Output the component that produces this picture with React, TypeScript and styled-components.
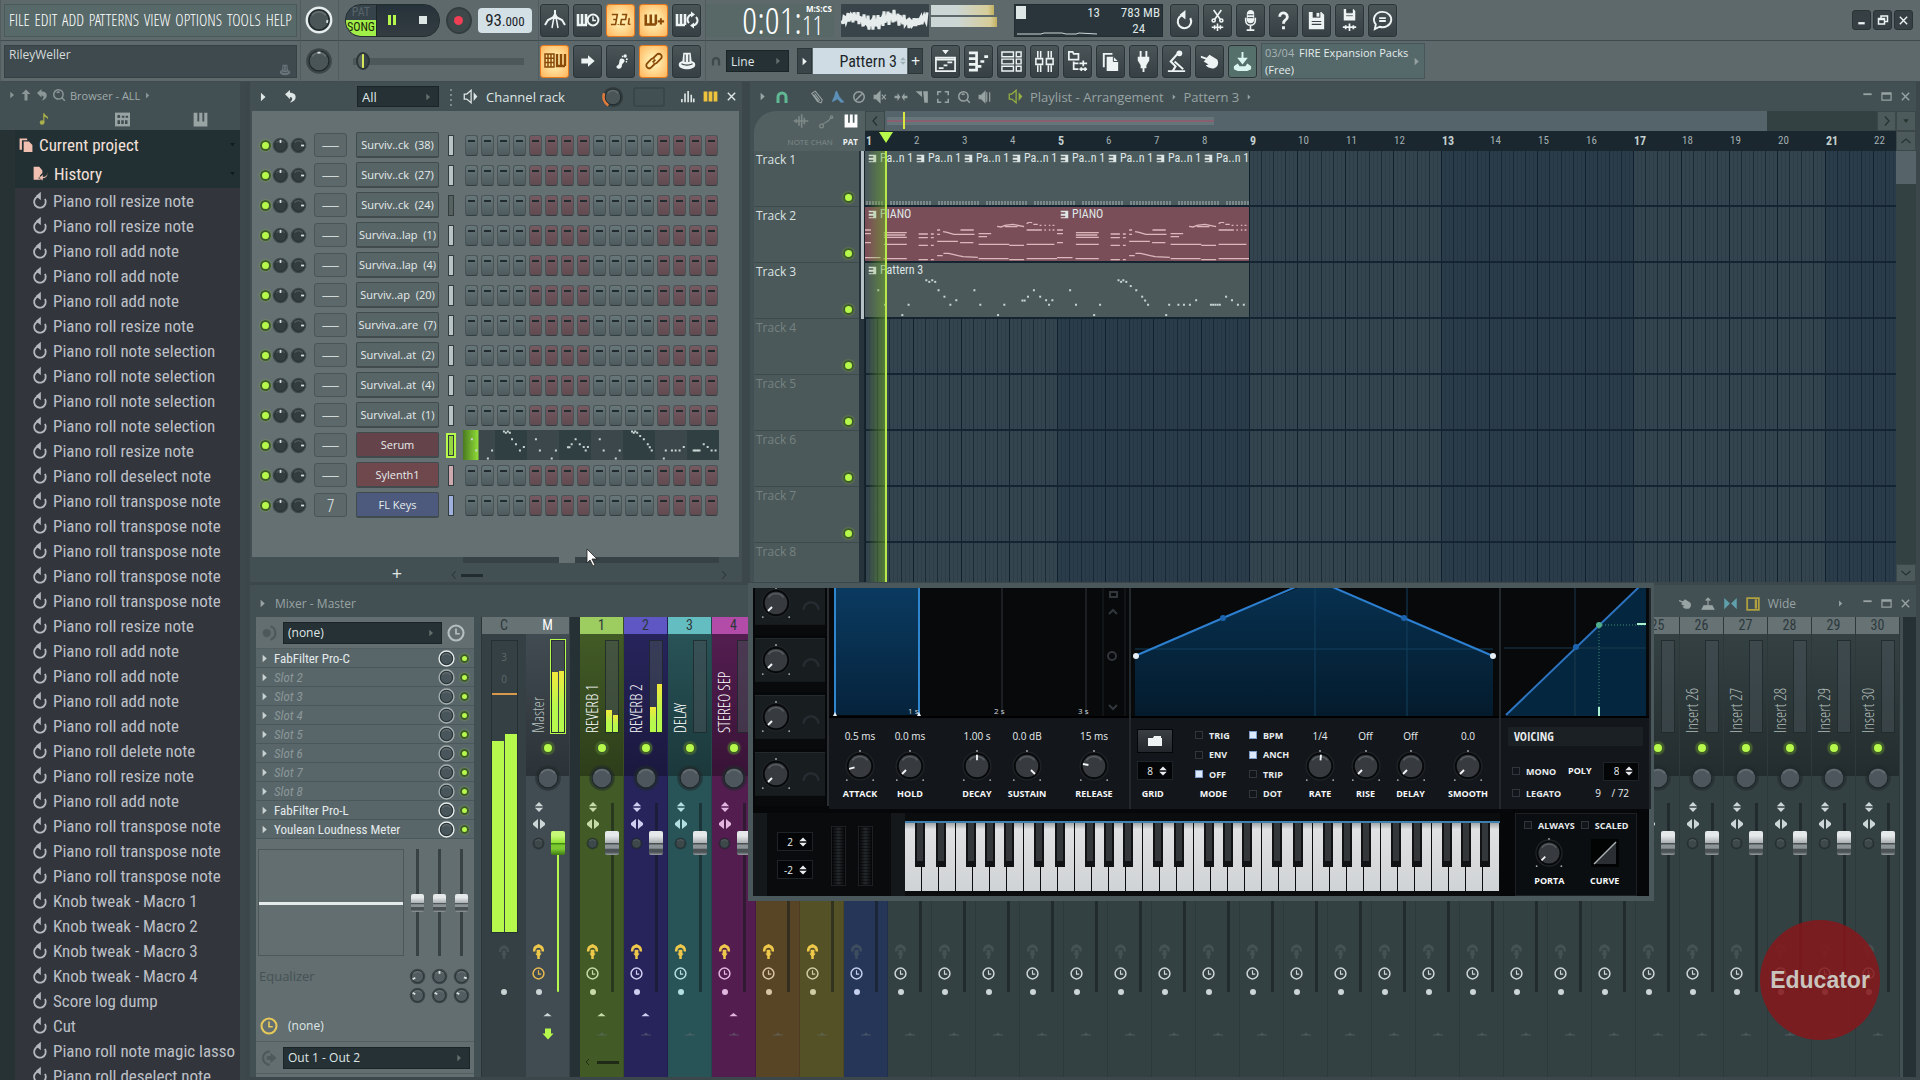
import React from "react";
import styled, { createGlobalStyle, css } from "styled-components";

const regular = `"Open Sans", "Noto Sans", sans-serif`;
const lime = "#b6f84c";
const light = css`font-family: "Open Sans Condensed Light", "Open Sans Condensed", "Roboto Condensed", sans-serif; font-weight: 400;`;
const cond = css`font-family: "Roboto Condensed", "Open Sans Condensed", sans-serif; font-weight: 400;`;

const Global = createGlobalStyle`
  *, *::before, *::after { box-sizing: border-box; }
  html, body { margin: 0; background: #3f4b4e; }
  body { font-family: ${regular}; font-size: 13px; color: #dfe6e6; }
  button, select, input { font: inherit; color: inherit; margin: 0; padding: 0; border: 0; background: none; border-radius: 0; outline: 0; }
  button { display: inline-flex; align-items: center; justify-content: center; }
  select { appearance: none; }
  svg { display: block; flex: none; }
`;

/* ---------- icons ---------- */

const glyphs: Record<string, React.ReactNode> = {
  metronome: (
    <g fill="none" stroke="currentColor" strokeWidth="2">
      <path d="M12 2v5" />
      <path d="M12 6 10 10h4z" fill="currentColor" />
      <path d="M11 9 5 12l-3 5M13 9l6 3 3 5" />
      <path d="M11 9 9 20M13 9l2 11" strokeWidth="1.500" />
    </g>
  ),
  keysClock: (
    <g fill="none" stroke="currentColor" strokeWidth="2">
      <path d="M2 6v11h9M6 6v11M10 6v11" strokeWidth="2.6" />
      <circle cx="17" cy="12" r="5.4" fill="#3b4447" />
      <path d="M17 8.500v4h3" strokeWidth="1.500" />
    </g>
  ),
  count: (
    <g fill="none" stroke="currentColor" strokeWidth="1.700">
      <path d="M2 6h6l-1 5.500H3.500M7 11.500 6 17H1M13 6h5l-1 5.500h-4.500l-1 5.500h5M21 10l-1 7M9 16.500v1" />
      <path d="M21.500 16v1.500" />
    </g>
  ),
  keysPlus: (
    <g fill="none" stroke="currentColor" strokeWidth="2.800">
      <path d="M3 6v11h11M8.500 6v11M14 6v11" />
      <path d="M19.500 10v7M16 13.500h7" strokeWidth="2.200" />
    </g>
  ),
  keysLoop: (
    <g fill="none" stroke="currentColor" strokeWidth="2">
      <path d="M2 6v11h8M6 6v11M10 6v11" strokeWidth="2.6" />
      <path d="M14 15a5 5 0 0 1 3-8.500M21 9a5 5 0 0 1-3 8.500" />
      <path d="m16 3.500 4 3-4 3zM19 14.500l-4 3 4 3z" fill="currentColor" stroke="none" />
    </g>
  ),
  typing: (
    <g fill="none" stroke="currentColor" strokeWidth="1.500">
      <path d="M2 5h9v13H2zM2 9.300h9M2 13.600h9M5 5v13M8 5v13" />
      <path d="M14 5v12h8M18 5v12M22 5v12" strokeWidth="2.400" />
    </g>
  ),
  arrow: <path d="M4 9h8V5l8 7-8 7v-4H4z" fill="currentColor" />,
  foot: (
    <g fill="currentColor">
      <path d="M12 9c3 0 5 1 4 4-1 2-3 2-3 5 0 2-2 4-5 3-2-1-2-3 0-4 3-1 1-7 4-8z" />
      <circle cx="17" cy="6" r="2" /><circle cx="14" cy="6.500" r="1" /><circle cx="19" cy="10" r="1.200" /><circle cx="18.500" cy="13" r="1" />
    </g>
  ),
  link: (
    <g fill="none" stroke="currentColor" strokeWidth="2">
      <path d="m10.500 13.500 3-3M11 9l4-4a3 3 0 0 1 4.500 4.500L15 14a3 3 0 0 1-3.500.5M13 15l-4 4a3 3 0 0 1-4.500-4.500L9 10a3 3 0 0 1 3.500-.5" />
    </g>
  ),
  pedal: (
    <g fill="currentColor">
      <path d="M8 3h8l1 9c3 1 4 2 4 4 0 3-4 5-9 5s-9-2-9-5c0-2 1-3 4-4z" />
      <path d="M10 5v8M14 5v8M6 15c3 2 9 2 12 0" stroke="#3b4447" strokeWidth="1.200" fill="none" />
    </g>
  ),
  undo: (
    <g fill="none" stroke="currentColor" strokeWidth="2.200">
      <path d="M12 6a7 7 0 1 0 6 3.500" />
      <path d="M13 1v10L7 6z" fill="currentColor" stroke="none" />
    </g>
  ),
  cut: (
    <g fill="none" stroke="currentColor" strokeWidth="1.700">
      <path d="M8 1l7 10M16 1 9 11" />
      <circle cx="8" cy="12" r="1.600" /><circle cx="16" cy="12" r="1.600" />
      <path d="M6 19h12M9 17v4M12 15v8M15 17v4" />
    </g>
  ),
  mic: (
    <g fill="none" stroke="currentColor" strokeWidth="1.700">
      <rect x="9" y="2" width="6" height="12" rx="3" fill="currentColor" />
      <path d="M7 9v3a5 5 0 0 0 10 0V9M12 17v4M8 22h8" />
      <path d="M9 6h6M9 9h6" stroke="#3b4447" strokeWidth="1" />
    </g>
  ),
  help: (
    <g fill="none" stroke="currentColor" strokeWidth="3">
      <path d="M8 8a4 4 0 1 1 6 3.500c-1.500 1-2 1.500-2 4M12 18v3" />
    </g>
  ),
  save: (
    <g>
      <path d="M4 3h13l3 3v15H4z" fill="currentColor" />
      <path d="M8 3h8v6H8z" fill="#3b4447" /><path d="M12 4h3v4h-3z" fill="currentColor" />
      <path d="M7 13h10M7 16h10" stroke="#3b4447" strokeWidth="1.200" />
    </g>
  ),
  saveWave: (
    <g>
      <path d="M6 0h10l2 2v10H6z" fill="currentColor" />
      <path d="M9 0h6v4H9zM8.500 7h7" fill="#3b4447" stroke="#3b4447" strokeWidth=".8" />
      <path d="M5 19h14M8 17v4M12 15v8M16 17v4" stroke="currentColor" strokeWidth="1.800" />
    </g>
  ),
  chat: (
    <g fill="none" stroke="currentColor" strokeWidth="2">
      <path d="M12 3a9 8 0 1 1-3 15.500L4 21l1-5A8.500 8 0 0 1 12 3zM8.500 9.500h7M8.500 12.500h7" />
    </g>
  ),
  playlist: (
    <g fill="none" stroke="currentColor" strokeWidth="1.800">
      <path d="M2 8h20v14H2zM2 10h20M5 19h5M10 16h4M14 13h5" />
      <path d="M8.500 0h7L12 4.500z" fill="currentColor" stroke="none" />
    </g>
  ),
  piano: (
    <g fill="none" stroke="currentColor" strokeWidth="2.800">
      <path d="M2 3h8v18H2M2 9h7M2 15h7" />
      <path d="M11 17h4M14 12h4M18 7h4" />
    </g>
  ),
  rack: (
    <g fill="none" stroke="currentColor" strokeWidth="1.500">
      <path d="M2 2h12v5H2zM2 9.500h12v5H2zM2 17h12v5H2zM17 2h5v5h-5zM17 9.500h5v5h-5zM17 17h5v5h-5z" />
    </g>
  ),
  mixer: (
    <g fill="none" stroke="currentColor" strokeWidth="1.600">
      <path d="M5 1v7M8 1v7M5 16v7M8 16v7M16 1v7M19 1v7M16 16v7M19 16v7" />
      <path d="M3 9h7v6H3zM14 9h7v6h-7z" />
    </g>
  ),
  tree: (
    <g fill="none" stroke="currentColor" strokeWidth="1.800">
      <path d="M3 2h4l1 2h5v6H3zM8 12v8h5M8 14h5M14 14h8M18 11v6M14 20h8M16 18v4M20 18v4" />
    </g>
  ),
  files: (
    <g fill="currentColor">
      <path d="M4 3h10v2H6v13H4z" />
      <path d="M8 7h7l5 5v10H8z" /><path d="M15 7v5h5" fill="none" stroke="#3b4447" />
    </g>
  ),
  plug: (
    <g fill="currentColor">
      <path d="M8 1h2v6h4V1h2v6h2v4l-3 5v3h-2v4h-2v-4H9v-3l-3-5V7h2z" />
    </g>
  ),
  tempoTap: (
    <g fill="none" stroke="currentColor" strokeWidth="2.200">
      <path d="M13 4 6 12l5 5-3 5" />
      <circle cx="15" cy="3.500" r="3" fill="currentColor" stroke="none" />
      <path d="M3 22h18M10 12l9 8" strokeWidth="2" />
    </g>
  ),
  hand: <path d="M3 6l6 2 3-3 8 5c2 3 1 8-3 9-4 1-7-1-9-3l3-1-5-3 2-2-5-2z" fill="currentColor" />,
  install: (
    <g fill="none" stroke="currentColor" strokeWidth="2">
      <path d="M12 2v11M8.500 9l3.500 4.500L15.500 9z" fill="currentColor" />
      <path d="M7 14l-4 3v3l4 2h10l4-2v-3l-4-3-2 3H9z" fill="currentColor" stroke="none" />
    </g>
  ),
  magnet: <path d="M6 21v-9a6 6 0 0 1 12 0v9" fill="none" stroke="currentColor" strokeWidth="4.500" />,
  pencil: <path d="M3 6l6-4 12 15-2 5-6-2zM8 6l9 12M6 8l9 12" fill="none" stroke="currentColor" strokeWidth="1.800" />,
  brush: <path d="M9 1c3 2 4 8 6 11l8 9-6 1-6-6-9 5c0-5 3-8 4-12s1-6 3-8z" fill="currentColor" />,
  none: <g fill="none" stroke="currentColor" strokeWidth="2.500"><circle cx="12" cy="12" r="9" /><path d="M6 18 18 6" /></g>,
  mute: <g stroke="currentColor" strokeWidth="2"><path d="M2 9h4l6-6v18l-6-6H2z" fill="currentColor" /><path d="M15 8l7 8M22 8l-7 8" /></g>,
  slip: <path d="M11 12 6 5v5H1v4h5v5zM13 12l5-7v5h5v4h-5v5z" fill="currentColor" />,
  slice: <path d="M1 2h11v10zM14 2h8v20h-6z" fill="currentColor" />,
  select: <path d="M3 9V3h6M15 3h6v6M21 15v6h-6M9 21H3v-6" fill="none" stroke="currentColor" strokeWidth="2.600" />,
  zoom: <g fill="none" stroke="currentColor" strokeWidth="2.500"><circle cx="11" cy="11" r="8" /><path d="m16 16 6 6M8 8a4 4 0 0 1 5 0" /></g>,
  play: <g stroke="currentColor" strokeWidth="2"><path d="M2 9h4l6-6v18l-6-6H2z" fill="currentColor" /><path d="M15 4v16M20 4v16" /></g>,
  speaker: <g fill="none" stroke="currentColor" strokeWidth="2"><path d="M2 8h4l7-6v20l-7-6H2z" /><path d="M17 5l6 7-6 7z" fill="currentColor" stroke="none" /></g>,
  bars: <path d="M3 21v-5M8 21V7M13 21V3M18 21V9M22 21v-6" stroke="currentColor" strokeWidth="2.600" />,
  steps: <path d="M1 4h6v16H1zM9 4h6v16H9zM17 4h6v16h-6z" fill="currentColor" />,
  close: <path d="M4 4l16 16M20 4 4 20" stroke="currentColor" strokeWidth="3" />,
  min: <path d="M3 7h18" stroke="currentColor" strokeWidth="4" />,
  minLow: <path d="M5 18h14" stroke="currentColor" strokeWidth="5" />,
  max: <path d="M2 4h20v16H2zM2 7h20" fill="none" stroke="currentColor" strokeWidth="2.600" />,
  restore: <path d="M3 9h12v11H3zM8 9V4h13v11h-6M3 11h12" fill="none" stroke="currentColor" strokeWidth="3" />,
  wide: <g><path d="M2 2h20v20H2z" fill="none" stroke="currentColor" strokeWidth="3" /><path d="M15 4h4v16h-4z" fill="currentColor" /></g>,
  tri: <path d="M7 2l11 10-11 10z" fill="currentColor" />,
  triDown: <path d="M4 7h16l-8 11z" fill="currentColor" />,
  up: <path d="M12 1l9 9h-6v13H9V10H3z" fill="currentColor" />,
  down: <path d="M12 23l11-12h-5V1H6v10H1z" fill="currentColor" />,
  back: <path d="M2 8l9-8v5c8 0 12 4 10 11-1 3-5 6-10 7 5-4 6-10 0-10v4z" fill="currentColor" />,
  note: <g fill="currentColor"><circle cx="7" cy="18" r="4" /><path d="M9 18V2h2c1 5 8 4 6 11-1-4-4-4-6-5v10z" /></g>,
  plugin: <g><path d="M0 1h24v22H0z" fill="currentColor" /><g fill="#3f4b4d"><circle cx="6" cy="7" r="2.500" /><path d="M11 6h4v3h-4zM17 6h4v3h-4zM4 13h4v6H4zM10 13h4v6h-4zM16 13h4v6h-4z" /></g></g>,
  keys: <path d="M1 1v22h22V1h-5v14h-3V1h-5v14H7V1z" fill="currentColor" />,
  clock: <g fill="none" stroke="currentColor" strokeWidth="2.800"><circle cx="12" cy="12" r="10" /><path d="M12 6v7h5" strokeWidth="2.200" /></g>,
  route: <g fill="currentColor"><path d="M3 12c0-6 2-9 5-10l4-2 4 2c3 1 5 4 5 10h-4c0-4-2-6-5-6s-5 2-5 6z" /><path d="M9 9h6v6h2l-3 4v5h-4v-5l-3-4h2z" /></g>,
  updown: <path d="M12 0l10 10H2zM12 24l10-10H2z" fill="currentColor" />,
  leftright: <path d="M10 2v20L0 14v-4zM14 2v20l10-8v-4z" fill="currentColor" />,
  caret: <path d="M12 5l11 9H1z" fill="currentColor" />,
  ext: <path d="M2 13h6l4-4 4 4h6v2H2z" fill="currentColor" />,
  chevL: <path d="M16 3l-8 9 8 9" fill="none" stroke="currentColor" strokeWidth="2.600" />,
  chevR: <path d="M8 3l8 9-8 9" fill="none" stroke="currentColor" strokeWidth="2.600" />,
  chevU: <path d="M3 16l9-8 9 8" fill="none" stroke="currentColor" strokeWidth="2.600" />,
  chevD: <path d="M3 8l9 8 9-8" fill="none" stroke="currentColor" strokeWidth="2.600" />,
  wave: <path d="M1 12h22M5 9v6M9 5v14M13 2v20M17 7v10" stroke="currentColor" strokeWidth="2.400" />,
  auto: <g fill="none" stroke="currentColor" strokeWidth="2"><circle cx="4" cy="19" r="3" /><path d="M6 17C10 12 14 14 20 5" /><circle cx="20" cy="5" r="2" /></g>,
  pat: <path d="M2 2h20v20H2v-3h12v-4H2v-5h12V6H2z" fill="currentColor" />,
  io: <g fill="none" stroke="currentColor" strokeWidth="3"><circle cx="9" cy="12" r="4" fill="currentColor" /><path d="M14 3a9.500 9.500 0 0 1 0 18" /></g>,
  out: <g fill="none" stroke="currentColor" strokeWidth="3"><path d="M13 3a9 9 0 1 0 0 18" /><path d="M9 12h6" strokeWidth="5" /><path d="M14 5l8 7-8 7z" fill="currentColor" stroke="none" /></g>,
  arc: <path d="M3 20a9 9 0 0 1 18 0" fill="none" stroke="currentColor" strokeWidth="3" />,
  doc: <g fill="currentColor"><path d="M1 1h13v3H5v16H1z" /><path d="M8 6h9l6 6v12H8z" /></g>,
  hist: <g><path d="M1 1h9l5 6v4l-4 4 4 7H1z" fill="currentColor" /><path d="M23 8c1 6-2 9-7 9v-4l-7 6 7 5v-4c6 0 9-5 7-12z" fill="currentColor" stroke="#223033" /></g>,
  mono: <path d="M2 3l9 9-9 9zM22 3l-9 9 9 9z" fill="currentColor" />,
  align: <path d="M12 2v13M8 6l4-4 4 4M5 15h14l3 6H2z" fill="currentColor" stroke="currentColor" strokeWidth="2" />,
  spin: <path d="M12 1l9 9H3zM12 23l9-9H3z" fill="currentColor" />,
};

const Icon = ({ n, s = 14 }: { n: string; s?: number }) => (
  <svg width={s} height={s} viewBox="0 0 24 24" aria-hidden="true">{glyphs[n]}</svg>
);

/* ---------- shared parts ---------- */

const Tint = styled.span<{ $c: string }>`display: inline-flex; color: ${p => p.$c};`;
const Gap = styled.span<{ $w: number }>`flex: none; width: ${p => p.$w}px;`;

const KnobButton = styled.button`flex: none;`;
const Knob = ({ s, a = 0, face = "#424c50", mark = "#d9e0e0", ring, arc, label, len = 0.55 }: {
  s: number; a?: number; face?: string; mark?: string; ring?: string; arc?: string; label: string; len?: number;
}) => {
  const r = (a * Math.PI) / 180;
  const dx = Math.sin(r), dy = -Math.cos(r);
  return (
    <KnobButton aria-label={label}>
      <svg width={s} height={s} viewBox="-12 -12 24 24">
        <circle r="11" fill="#20292b" opacity=".55" />
        {ring && <circle r="10.500" fill="none" stroke={ring} strokeWidth="2" />}
        {arc && <path d="M-9.500 -4A10.500 10.500 0 0 0 -5 9" fill="none" stroke={arc} strokeWidth="3" />}
        <circle r="8.500" fill={face} stroke="#1e272a" strokeWidth="1" />
        <path d="M-6 -4a7.300 7.300 0 0 1 12 0" fill="none" stroke="#fff" opacity=".13" strokeWidth="2" />
        {mark !== "none" && <path d={`M${dx * 8 * (1 - len)} ${dy * 8 * (1 - len)}L${dx * 8} ${dy * 8}`} stroke={mark} strokeWidth="2.500" />}
      </svg>
    </KnobButton>
  );
};

const Led = styled.input.attrs({ type: "checkbox", defaultChecked: true })<{ $s?: number }>`
  appearance: none; flex: none; width: ${p => p.$s ?? 11}px; height: ${p => p.$s ?? 11}px; border-radius: 50%;
  background: #455; border: 2px solid #3f5a2c;
  &:checked { background: ${lime}; box-shadow: 0 0 2px rgba(160, 230, 60, .6); }
`;

const Picker = styled.span<{ $w?: string; $h: number; $bare?: boolean }>`
  display: flex; align-items: center; flex: ${p => (p.$w ? "none" : 1)}; width: ${p => p.$w ?? "auto"}; height: ${p => p.$h}px;
  padding: 0 6px 0 4px; color: #dfe6e6; background: #263135; border: 1px solid #1b2528;
  ${p => p.$bare && css`background: none; border-color: transparent;`}
  select { flex: 1; min-width: 0; }
  svg { color: #64706f; }
`;
const Choose = ({ w, h, label, value, bare }: { w?: string; h: number; label: string; value: string; bare?: boolean }) => (
  <Picker $w={w} $h={h} $bare={bare}>
    <select aria-label={label} defaultValue={value}><option>{value}</option></select>
    <Icon n="tri" s={8} />
  </Picker>
);

/* ---------- toolbar ---------- */

const Bar = styled.header`
  display: grid; grid-template-columns: 300px 38px 200px 167px 1fr; grid-auto-rows: 41px; background: #5e696b;
`;
const Cell = styled.div<{ $gap?: number; $pad?: number }>`
  display: flex; align-items: center; gap: ${p => p.$gap ?? 0}px; padding: 0 ${p => p.$pad ?? 0}px;
  min-width: 0; border-bottom: 1px solid #3f4b4f; border-left: 1px solid #515c5f;
`;
const Menu = styled.nav`
  display: flex; flex: 1; align-items: center; justify-content: space-between; height: 33px; padding: 0 4px;
  background: #576969; border: 1px solid #4a5a5c; ${light} font-size: 16px; color: #fff;
  a { color: inherit; text-decoration: none; }
`;
const Hint = styled.div`
  display: flex; flex: 1; justify-content: space-between; height: 33px; padding: 2px 4px 0; background: #3f4a4e; border: 1px solid #364145;
  font: 400 12px/14px ${regular}; color: #d5dcdc;
  span { align-self: flex-end; display: flex; color: #68757a; }
`;
const Transport = styled.div`
  display: flex; height: 33px; border-radius: 16px; overflow: hidden; background: #2b363b; border: 1px solid #242e31;
`;
const Mode = styled.button`flex-direction: column; width: 32px; border-right: 1px solid #1c2528;`;
const ModeLine = styled.span<{ $on?: boolean }>`
  display: flex; align-items: center; justify-content: center; width: 100%; flex: 1; ${cond} font-size: 12px; line-height: 15px;
  background: ${p => (p.$on ? "#a2ee48" : "#36434a")}; color: ${p => (p.$on ? "#16240a" : "#56646a")};
`;
const Play = styled.button<{ $c: string }>`width: 32px; color: ${p => p.$c}; background: linear-gradient(#26323a, #333c41);`;
const Record = styled.button`
  width: 27px; height: 27px; border-radius: 50%; background: #3d484b; border: 2px solid #333d40;
  &::after { content: ""; width: 9px; height: 9px; border-radius: 50%; background: #ee3f55; }
`;
const Tempo = styled.button`
  width: 56px; height: 25px; border-radius: 4px; background: #d3e0e6; color: #1b2428; ${cond} font-size: 17px; align-items: baseline; line-height: 24px;
  small { font-size: 13px; }
`;
const Tool = styled.button<{ $on?: boolean; $green?: boolean }>`
  width: 29px; height: 33px; flex: none; border-radius: 3px; color: #eef3f3;
  background: linear-gradient(#4a5558, #363f43); border: 1px solid #2b3538; box-shadow: 0 0 0 1px #68757a55;
  ${p => p.$on && css`background: radial-gradient(#ffeeb0 20%, #ffb45a); border-color: #e87a1e; color: #8a4a08;`}
  ${p => p.$green && css`background: #55706a; color: #d9f6ee;`}
`;
const Track = styled.input.attrs({ type: "range" })`
  appearance: none; flex: 1; min-width: 0; height: 18px;
  background: linear-gradient(#4d585a, #4d585a) 0 50% / 100% 7px no-repeat;
  &::-webkit-slider-thumb { appearance: none; width: 14px; height: 18px; border-radius: 50%; border: 2px solid #2b3538; background: linear-gradient(90deg, #55605f 40%, #d7e85a 42% 58%, #39444a 60%); }
`;
const Clock = styled.div`
  display: flex; width: 128px; height: 33px; padding-right: 2px; justify-content: flex-end; background: #576867; color: #fff; ${light} font-size: 37px; line-height: 32px;
`;
const ClockEnd = styled.span`
  display: flex; flex-direction: column; sup { font: bold 8px/10px ${regular}; padding-left: 4px; } small { font-size: 26px; line-height: 22px; }
`;
const Scope = styled.div`display: flex; gap: 2px; width: 166px; height: 33px;`;
const ScopeBox = styled.div`background: #39444a; width: 88px;`;
const Peaks = styled.div`display: flex; flex-direction: column; gap: 2px; width: 66px; padding-top: 1px;`;
const Peak = styled.i<{ $w: number }>`width: ${p => p.$w}%; height: 10px; background: linear-gradient(90deg, #ccd6d4 40%, #d6cd98 90%, #c2b060);`;
const Cpu = styled.div`
  display: grid; grid-template-columns: 1fr 60px; width: 149px; height: 33px; background: #29353b; border: 1px solid #222d31; ${cond} font-size: 13px; line-height: 16px; color: #dfe6e6;
`;
const CpuCol = styled.div`display: flex; flex-direction: column; align-items: flex-end; padding-right: 2px;`;
const CpuTop = styled.span`display: flex; justify-content: space-between; width: 100%; padding-left: 1px; i { width: 10px; height: 13px; margin-top: 1px; background: #dfe6e6; }`;
const Buttons = styled.div`display: flex; gap: 4px; align-items: center;`;
const SnapGroup = styled.div`display: flex; gap: 4px; align-items: center; font-size: 12px;`;
const PatternGroup = styled.div`display: flex; align-items: center; gap: 1px;`;
const PatternBox = styled.span`
  display: flex; align-items: center; justify-content: flex-end; gap: 2px; width: 94px; height: 26px; background: #cfdce4; color: #1c262a; ${cond} font-size: 16px;
  select { width: 78px; text-align: right; text-align-last: right; } svg { color: #9fb0b8; }
`;
const Small = styled.button`width: 15px; height: 26px; background: #3a454a; border: 1px solid #2c373a; color: #eef3f3; font: 400 16px ${regular};`;
const News = styled.a`
  display: grid; grid-template-columns: 34px 1fr 12px; align-items: center; width: 164px; height: 36px; padding-left: 3px; background: #55686a; border: 1px solid #47565a;
  font: 400 11px/15px ${regular}; color: #e4ecec; text-decoration: none; white-space: nowrap;
  em { font-style: normal; color: #a8b4b4; } span:last-of-type { grid-column: 1 / 3; grid-row: 2; } svg { grid-column: 3; grid-row: 1 / 3; color: #93a09f; }
`;
const WinButtons = styled.div`display: flex; gap: 2px; margin-left: auto; padding-right: 7px;`;
const WinButton = styled.button`width: 19px; height: 20px; border-radius: 3px; background: #353f44; border: 1px solid #2a3437; color: #eef3f3;`;

const scopePath = Array.from({ length: 86 }, (_, i) => `${i + 1} ${(16 + Math.sin(i * 0.16 + 3) * 3 + Math.sin(i * 1.9) * 4 + Math.sin(i * 3.1) * 4).toFixed(1)}`).join("L");

const Toolbar = () => (
  <Bar>
    <Cell $pad={3}><Menu>{["FILE", "EDIT", "ADD", "PATTERNS", "VIEW", "OPTIONS", "TOOLS", "HELP"].map(m => <a key={m} href="#menu">{m}</a>)}</Menu></Cell>
    <Cell $pad={4}><Knob s={28} a={100} ring="#e8eeee" face="#4a5558" label="Master volume" len={0.2} /></Cell>
    <Cell $gap={6} $pad={6}>
      <Transport>
        <Mode aria-label="Pattern or song"><ModeLine>PAT</ModeLine><ModeLine $on>SONG</ModeLine></Mode>
        <Play $c={lime} aria-label="Pause"><svg width="8" height="10"><path d="M0 0h3v10H0zM5 0h3v10H5z" fill="currentColor" /></svg></Play>
        <Play $c="#dde5e5" aria-label="Stop"><svg width="8" height="8"><path d="M0 0h8v8H0z" fill="currentColor" /></svg></Play>
      </Transport>
      <Record aria-label="Record" />
      <Tempo aria-label="Tempo">93<small>.000</small></Tempo>
    </Cell>
    <Cell $gap={4} $pad={1}>
      <Tool aria-label="Metronome"><Icon n="metronome" s={24} /></Tool>
      <Tool aria-label="Wait for input"><Icon n="keysClock" s={24} /></Tool>
      <Tool $on aria-label="Countdown"><Icon n="count" s={22} /></Tool>
      <Tool $on aria-label="Overdub"><Icon n="keysPlus" s={22} /></Tool>
      <Tool aria-label="Loop record"><Icon n="keysLoop" s={24} /></Tool>
    </Cell>
    <Cell $gap={7}>
      <Clock>0:01:<ClockEnd><sup>M:S:CS</sup><small>11</small></ClockEnd></Clock>
      <Scope>
        <ScopeBox><svg width="88" height="33"><path d={`M${scopePath}`} fill="none" stroke="#e6ecec" strokeWidth="3" /></svg></ScopeBox>
        <Peaks><Peak $w={96} /><Peak $w={100} /></Peaks>
      </Scope>
      <Cpu>
        <CpuCol><CpuTop><i />13</CpuTop><svg width="84" height="14"><path d="M1 13h24l3-1h18l4 1h10l3-1 18 1" fill="none" stroke="#cfd8d8" /></svg></CpuCol>
        <CpuCol><span>783 MB</span><span>24&nbsp;&nbsp;&nbsp;&nbsp;&nbsp;</span></CpuCol>
      </Cpu>
      <Buttons>
        {["undo", "cut", "mic", "help", "save", "saveWave", "chat"].map(n => <Tool key={n} aria-label={n}><Icon n={n} s={23} /></Tool>)}
      </Buttons>
      <WinButtons>
        <WinButton aria-label="Minimise"><Icon n="minLow" s={11} /></WinButton>
        <WinButton aria-label="Restore"><Icon n="restore" s={12} /></WinButton>
        <WinButton aria-label="Close"><Icon n="close" s={11} /></WinButton>
      </WinButtons>
    </Cell>

    <Cell $pad={3}><Hint>RileyWeller<span><Icon n="pedal" s={14} /></span></Hint></Cell>
    <Cell $pad={4}><Knob s={28} a={0} face="#4a5558" label="Master pitch" len={0.2} /></Cell>
    <Cell $pad={14}><Track aria-label="Song position" defaultValue={2} /></Cell>
    <Cell $gap={4} $pad={1}>
      <Tool $on aria-label="Typing keyboard"><Icon n="typing" s={24} /></Tool>
      <Tool aria-label="Step edit"><Icon n="arrow" s={20} /></Tool>
      <Tool aria-label="Auto scroll"><Icon n="foot" s={20} /></Tool>
      <Tool $on aria-label="Link"><Icon n="link" s={22} /></Tool>
      <Tool aria-label="Multilink"><Icon n="pedal" s={22} /></Tool>
    </Cell>
    <Cell $gap={8} $pad={4}>
      <SnapGroup><Tint $c="#3f4a4d"><Icon n="magnet" s={12} /></Tint><Choose w="63px" h={22} label="Snap" value="Line" /></SnapGroup>
      <PatternGroup>
        <Small aria-label="Patterns"><Icon n="tri" s={9} /></Small>
        <PatternBox><select aria-label="Pattern" defaultValue="p"><option value="p">Pattern 3</option></select><Icon n="spin" s={8} /></PatternBox>
        <Small aria-label="Add pattern">+</Small>
      </PatternGroup>
      <Buttons>
        {["playlist", "piano", "rack", "mixer", "tree", "files", "plug", "tempoTap", "hand"].map(n => <Tool key={n} aria-label={n}><Icon n={n} s={23} /></Tool>)}
        <Tool $green aria-label="Install"><Icon n="install" s={23} /></Tool>
        <News href="#news"><em>03/04</em><span>FIRE Expansion Packs</span><span>(Free)</span><Icon n="tri" s={9} /></News>
      </Buttons>
    </Cell>
  </Bar>
);

/* ---------- browser ---------- */

const Side = styled.aside`display: flex; flex-direction: column; min-height: 0; overflow: hidden; background: #435053; border-right: 6px solid #3c484b;`;
const SideHead = styled.div`display: flex; align-items: center; gap: 4px; height: 26px; padding: 0 8px; font-size: 11px; color: #a0abab; svg { color: #8b9797; }`;
const SideTabs = styled.div`display: flex; justify-content: space-around; align-items: center; height: 22px; padding-left: 6px; color: #98a4a4;`;
const Tree = styled.div`flex: 1; min-height: 0; display: grid; grid-template-columns: 15px 1fr; background: #263234;`;
const TreeList = styled.ul`
  margin: 0; padding: 0; list-style: none; min-width: 0; overflow: hidden; background: #33353d; ${cond} font-size: 17px; color: #bcc0c6;
`;
const Branch = styled.li<{ $in: number }>`
  display: flex; align-items: center; gap: 6px; height: 29px; padding: 0 4px 0 ${p => p.$in}px; background: #223033; color: #f4e0da;
  svg { color: #f2c0b0; } svg:last-child { margin-left: auto; color: #101a1c; }
`;
const Leaf = styled.li`display: flex; align-items: center; gap: 3px; height: 25px; padding-left: 15px; white-space: nowrap; svg { color: #b4b9bf; }`;

const runs: [string, number][] = [
  ["Piano roll resize note", 2], ["Piano roll add note", 3], ["Piano roll resize note", 1], ["Piano roll note selection", 4],
  ["Piano roll resize note", 1], ["Piano roll deselect note", 1], ["Piano roll transpose note", 5], ["Piano roll resize note", 1],
  ["Piano roll add note", 4], ["Piano roll delete note", 1], ["Piano roll resize note", 1], ["Piano roll add note", 1],
  ["Piano roll transpose note", 3], ["Knob tweak - Macro 1", 1], ["Knob tweak - Macro 2", 1], ["Knob tweak - Macro 3", 1],
  ["Knob tweak - Macro 4", 1], ["Score log dump", 1], ["Cut", 1], ["Piano roll note magic lasso", 1], ["Piano roll deselect note", 1],
];
const history = runs.flatMap(([t, n]) => Array<string>(n).fill(t));

const Browser = () => (
  <Side>
    <SideHead><Icon n="tri" s={8} /><Icon n="up" s={12} /><Icon n="back" s={12} /><Icon n="zoom" s={14} />Browser - ALL <Icon n="tri" s={7} /></SideHead>
    <SideTabs><Tint $c="#a9b04a"><Icon n="note" s={14} /></Tint><Icon n="plugin" s={15} /><Icon n="keys" s={15} /></SideTabs>
    <Tree>
      <div />
      <TreeList>
        <Branch $in={4}><Icon n="doc" s={14} />Current project<Icon n="triDown" s={7} /></Branch>
        <Branch $in={18}><Icon n="hist" s={15} />History<Icon n="triDown" s={7} /></Branch>
        {history.map((t, i) => <Leaf key={i}><Icon n="undo" s={20} />{t}</Leaf>)}
      </TreeList>
    </Tree>
  </Side>
);

/* ---------- channel rack ---------- */

const Windows = styled.div`display: grid; grid-template-rows: 503px 1fr; min-width: 0; min-height: 0;`;
const TopWindows = styled.div`display: grid; grid-template-columns: 500px 1fr; min-width: 0;`;
const Win = styled.section`display: flex; flex-direction: column; min-width: 0; min-height: 0; background: #435053; border: solid #3b474a; border-width: 0 4px 3px 4px;`;
const WinHead = styled.div<{ $gap?: number; $dim?: boolean; $tall?: boolean }>`
  display: flex; align-items: center; gap: ${p => p.$gap ?? 8}px; height: ${p => (p.$tall ? 32 : 29)}px; padding: ${p => (p.$tall ? 5 : 0)}px 5px 0 8px; flex: none; color: ${p => (p.$dim ? "#98a3a3" : "#dfe6e6")}; font-size: ${p => (p.$tall ? 12 : 13)}px;
`;
const Push = styled.span`margin-left: auto; display: flex; align-items: center; gap: 8px;`;
const Rack = styled.div`display: flex; flex-direction: column; flex: 1; margin: 0 3px 0 2px; padding: 19px 22px 0 8px; background: #647072;`;
const RackRow = styled.div`display: grid; grid-template-columns: 45px 33px 83px 6px 256px; column-gap: 9px; align-items: center; height: 30px;`;
const RackKnobs = styled.div`display: flex; align-items: center; gap: 1px;`;
const Route = styled.button`width: 33px; height: 24px; border: 1px solid #4a5558; border-radius: 3px; background: #5c686a; color: #e6ecec; ${light} font-size: 18px;`;
const Channel = styled.button<{ $bg: string }>`
  width: 83px; height: 26px; border-radius: 2px; background: ${p => p.$bg}; border: 1px solid #414b4e; border-bottom-width: 2px;
  font-size: 11px; color: #e6ecec; white-space: pre;
`;
const Select = styled.button<{ $c: string; $on?: boolean }>`
  width: 6px; height: 21px; background: ${p => p.$c}; border: 1px solid #323c3f; ${p => p.$on && css`outline: 2px solid ${lime};`}
`;
const Steps = styled.div`display: grid; grid-template-columns: repeat(16, 13px); column-gap: 3px; padding-left: 2px;`;
const Step = styled.button<{ $red: boolean }>`
  height: 21px; border-radius: 3px; border: 1px solid #4a5456; border-bottom-color: #333d40; align-items: flex-start; padding-top: 4px;
  background: ${p => (p.$red ? "linear-gradient(#775a61, #604a50)" : "linear-gradient(#67777a, #4d5a5e)")};
  &::before { content: ""; width: 7px; height: 2px; background: #222c2e; }
`;
const Roll = styled.div`height: 30px; background: linear-gradient(90deg, #4a7a20, #8fdc38 15px, transparent 16px), repeating-linear-gradient(90deg, #3b474a 0 32px, #303f42 32px 64px);`;
const RackFoot = styled.div`display: grid; grid-template-columns: 1fr 280px; height: 25px; padding-right: 13px; color: #e0e6e6; font-size: 18px; line-height: 16px;`;
const AddChannel = styled.button`width: 30px; height: 16px; margin: 8px 0 0 132px;`;
const FootScroll = styled.div`height: 6px; margin: 0 10px 0 14px; background: linear-gradient(90deg, #364245 0 96px, #647072 96px 112px, #364245 112px);`;
const FootPan = styled.div`display: flex; align-items: center; gap: 2px; height: 12px; margin-top: 6px; color: #2c383b; i { width: 22px; height: 3px; background: #212d30; margin-right: auto; }`;

const channels: { name: string; bg?: string; sel?: string; route?: string; roll?: boolean }[] = [
  { name: "Surviv..ck  (38)" }, { name: "Surviv..ck  (27)" }, { name: "Surviv..ck  (24)", sel: "#56625f" }, { name: "Surviva..lap  (1)" },
  { name: "Surviva..lap  (4)" }, { name: "Surviv..ap  (20)" }, { name: "Surviva..are  (7)" }, { name: "Survival..at  (2)" },
  { name: "Survival..at  (4)" }, { name: "Survival..at  (1)" }, { name: "Serum", bg: "#65434a", sel: "#96d640", roll: true },
  { name: "Sylenth1", bg: "#6f484e", sel: "#cda9b0" }, { name: "FL Keys", bg: "#4d5a7e", sel: "#9fb0dc", route: "7" },
];

const dots = [
  [36, 83], [54, 128], [101, 160], [118, 128], [166, 52], [174, 57], [182, 52], [190, 57], [199, 83], [215, 103], [231, 128], [247, 114],
  [296, 83], [312, 128], [360, 160], [377, 128], [426, 115], [432, 115], [441, 103], [457, 83], [474, 103], [490, 114], [498, 128], [507, 114],
  [555, 83], [571, 128], [620, 160], [636, 128], [686, 52], [693, 57], [699, 52], [707, 57], [719, 70], [734, 83], [750, 103], [758, 115],
  [766, 128], [815, 160], [823, 128], [848, 128], [863, 128], [879, 128], [896, 114], [936, 128], [942, 128], [948, 128], [954, 128],
  [960, 128], [977, 103], [993, 114], [1009, 128], [1025, 128],
];
const Melody = ({ w, h, top, r }: { w: number; h: number; top: number; r: number }) => (
  <svg width={w} height={h} viewBox={`0 0 ${w} ${h}`}>
    {dots.map(([x, y], i) => <rect key={i} x={(x / 1039) * w - r / 2} y={((y - top) / (166 - top)) * h - r / 2} width={r} height={r} fill="#c8d4d2" />)}
  </svg>
);

const ChannelRack = () => (
  <Win>
    <WinHead>
      <Icon n="tri" s={10} /><Gap $w={0} /><Icon n="back" s={13} />
      <Gap $w={44} />
      <Choose w="82px" h={21} label="Group" value="All" />
      <Tint $c="#7d8989"><svg width="8" height="18"><path d="M4 1v17" stroke="currentColor" strokeDasharray="2 3" strokeWidth="2" /></svg></Tint>
      <Icon n="speaker" s={15} /><span>Channel rack</span>
      <Push>
        <Knob s={22} face="#4a5558" mark="none" arc="#e07a3c" label="Swing" />
        <Tint $c="#39464a"><svg width="40" height="20"><rect x="2" y="1" width="30" height="18" rx="2" fill="none" stroke="currentColor" strokeWidth="2" /></svg></Tint>
        <Icon n="bars" s={15} /><Tint $c="#eec23c"><Icon n="steps" s={15} /></Tint><Icon n="close" s={11} />
      </Push>
    </WinHead>
    <Rack>
      {channels.map((c, i) => (
        <RackRow key={i}>
          <RackKnobs><Led aria-label={`${c.name} mute`} /><Knob s={17} a={0} face="#333d40" label="Pan" /><Knob s={17} a={90} face="#333d40" label="Volume" /></RackKnobs>
          <Route aria-label="Mixer track">{c.route ?? "—"}</Route>
          <Channel $bg={c.bg ?? "#586567"}>{c.name}</Channel>
          <Select $c={c.sel ?? "#b9c5c5"} $on={c.roll} aria-label="Select channel" />
          {c.roll ? <Roll><Melody w={256} h={30} top={46} r={2} /></Roll> : (
            <Steps>{Array.from({ length: 16 }, (_, k) => <Step key={k} $red={k % 8 > 3} aria-label={`Step ${k + 1}`} />)}</Steps>
          )}
        </RackRow>
      ))}
    </Rack>
    <RackFoot><AddChannel aria-label="Add channel">+</AddChannel><div><FootScroll /><FootPan><Icon n="chevL" s={10} /><i /><Icon n="chevR" s={10} /></FootPan></div></RackFoot>
  </Win>
);

/* ---------- playlist ---------- */

const PlaylistGrid = styled.div`display: grid; grid-template-columns: 111px 1fr 20px; grid-template-rows: 20px 20px 1fr; flex: 1; min-height: 0; padding-left: 4px;`;
const Corner = styled.div`
  grid-row: 1 / 3; display: flex; flex-direction: column; justify-content: space-between; align-items: flex-end; padding: 2px 7px 4px; background: #536062; border-top-left-radius: 22px;
  font-size: 8px; line-height: 10px; color: #7d8986;
  div { display: flex; gap: 10px; align-items: center; } b { color: #eef2f2; }
`;
const HScroll = styled.div`display: grid; grid-template-columns: 20px 1fr 110px 19px; background: #54636a;`;
const HTrough = styled.i`background: #344143;`;
const HThumb = styled.div`position: relative; background: linear-gradient(#8a6070, #8a6070) 2px 9px / 327px 2px no-repeat, linear-gradient(#66757a, #66757a) 2px 6px / 327px 8px no-repeat, #55646b;`;
const Cue = styled.i`position: absolute; left: 18px; top: 1px; width: 2px; height: 17px; background: #d8e840;`;
const Sq = styled.button<{ $h?: number }>`height: ${p => (p.$h ? `${p.$h}px` : "auto")}; background: #4d5a5c; border: 1px solid #3b4749; color: #27332f;`;
const Ruler = styled.div`
  display: flex; position: relative; overflow: hidden; background: #1a272e; color: #a3afb2; ${cond} font-size: 11px; line-height: 20px;
`;
const Bn = styled.span<{ $b: boolean }>`width: 48px; flex: none; padding-left: 1px; ${p => p.$b && css`font-weight: bold; font-size: 12px; color: #c3cfd0;`}`;
const Marker = styled.i`position: absolute; left: 14px; top: 1px; border: 7px solid transparent; border-top: 11px solid ${lime}; border-bottom: 0;`;
const Lanes = styled.div`grid-column: 1 / 3; position: relative; min-height: 0; overflow: hidden;`;
const Lane = styled.div`display: grid; grid-template-columns: 105px 6px 1fr; height: 56px;`;
const LaneHead = styled.div<{ $on: boolean }>`
  display: flex; justify-content: space-between; padding: 0 5px 3px 2px; background: #4c595a; border-bottom: 1px solid #3d4a4b; font-size: 12px; line-height: 17px; color: ${p => (p.$on ? "#dbe2e2" : "#768280")};
  input { align-self: flex-end; }
`;
const LaneEdge = styled.i<{ $on: boolean }>`background: linear-gradient(90deg, #26333a 0 2px, ${p => (p.$on ? "#b4bfc6" : "#26333a")} 2px 5px, #18242a 5px);`;
const LaneBody = styled.div`
  display: flex; overflow: hidden; border-bottom: 2px solid #142430;
  background:
    repeating-linear-gradient(90deg, #10202c 0 1px, transparent 1px 48px),
    repeating-linear-gradient(90deg, rgba(12, 26, 38, .5) 0 1px, transparent 1px 12px),
    repeating-linear-gradient(90deg, rgba(12, 26, 38, .16) 0 1px, transparent 1px 4px),
    repeating-linear-gradient(90deg, #34444f 0 192px, #2a3c49 192px 384px);
`;
const Clip = styled.div<{ $w: number; $bg: string }>`
  flex: none; width: ${p => p.$w}px; height: 54px; overflow: hidden; background: ${p => p.$bg}; color: #dfe6e6; ${cond} font-size: 12px; line-height: 15px;
`;
const ClipName = styled.div`display: flex; align-items: center; gap: 3px; height: 15px; padding-left: 3px; white-space: nowrap;`;
const Glow = styled.i`position: absolute; left: 113px; top: 0; bottom: 0; width: 20px; background: linear-gradient(90deg, rgba(80, 150, 30, 0), rgba(110, 170, 40, .55)); border-right: 2px solid #b9e84c;`;
const VScroll = styled.div`display: flex; flex-direction: column; justify-content: space-between; grid-row: 2 / 4; grid-column: 3; background: #344143; div { display: flex; flex-direction: column; }`;
const VThumb = styled.i`height: 33px; background: #56646a;`;

const pianoNotes = "M0 71h16M0 82h16M0 109h16M0 154h42M51 79h62M51 86h58M51 93h62M51 114h62M50 157h63M145 83h25M145 94h25M145 117h25M145 160h25M178 83h8M178 94h8M178 117h8M178 160h8M195 71h8M195 84h8M195 105h56M195 148h15M211 76l11 2 18 6h56M258 71h36M257 109h36M212 141h14l26 7 13 3 40 2M307 82h34M307 91h23M307 114h83M307 157h81M357 60l11 2 10-5 22-3 30 7M378 61h34M390 117h40M390 160h40M437 52l8-5 7 2M437 71h41M455 54h12M472 57h5M485 57h4M485 71h4M497 57h4M497 71h4M507 57h5M507 71h5M437 114h75M437 157h82";
const tools: [string, string][] = [["pencil", "#98a3a3"], ["brush", "#5b8fb5"], ["none", "#98a3a3"], ["mute", "#98a3a3"], ["slip", "#98a3a3"], ["slice", "#98a3a3"], ["select", "#98a3a3"], ["zoom", "#98a3a3"], ["play", "#98a3a3"]];
const ticks = Array.from({ length: 8 }, (_, g) => (g === 3 ? "" : `M${g * 6 + 2} 0v4M${g * 6 + 5} 0v4`)).join("");

const Lane1 = () => (<>{Array.from({ length: 8 }, (_, i) => (
  <Clip key={i} $w={48} $bg="#4b5a5c"><ClipName><Icon n="pat" s={9} />Pa..n 1</ClipName><svg width="48" height="39"><g transform="translate(0 35)"><path d={ticks} stroke="#aab4b4" /></g></svg></Clip>
))}</>);
const Lane2 = () => (<>{[0, 1].map(i => (
  <Clip key={i} $w={192} $bg="#7a4e59"><ClipName><Icon n="pat" s={9} />PIANO</ClipName>
    <svg width="192" height="39" viewBox="0 47 519 117" preserveAspectRatio="none"><path d={pianoNotes} fill="none" stroke="#dcb8bd" strokeWidth="4" /></svg></Clip>
))}</>);
const Lane3 = () => (
  <Clip $w={384} $bg="#4b595b"><ClipName><Icon n="pat" s={9} />Pattern 3</ClipName><Melody w={384} h={39} top={45} r={2} /></Clip>
);

const Playlist = () => (
  <Win>
    <WinHead $gap={7} $dim>
      <Icon n="tri" s={9} /><Tint $c="#5fb893"><Icon n="magnet" s={16} /></Tint><Gap $w={6} />
      {tools.map(([n, c]) => <Tint key={n} $c={c}><Icon n={n} s={14} /></Tint>)}
      <Gap $w={2} />
      <Tint $c="#93b040"><Icon n="speaker" s={15} /></Tint>
      <span>Playlist - Arrangement</span><Icon n="tri" s={6} /><span>Pattern 3</span><Icon n="tri" s={6} />
      <Push><Icon n="min" s={11} /><Icon n="max" s={11} /><Icon n="close" s={11} /></Push>
    </WinHead>
    <PlaylistGrid>
      <Corner><div><Icon n="wave" s={16} /><Icon n="auto" s={15} /><Tint $c="#fff"><Icon n="keys" s={14} /></Tint></div><div><span>NOTE CHAN</span><b>PAT</b></div></Corner>
      <HScroll><Sq aria-label="Scroll left"><Icon n="chevL" s={12} /></Sq><HThumb><Cue /></HThumb><HTrough /><Sq aria-label="Scroll right"><Icon n="chevR" s={12} /></Sq></HScroll>
      <Sq aria-label="Options"><Icon n="triDown" s={8} /></Sq>
      <Ruler>{Array.from({ length: 22 }, (_, i) => <Bn key={i} $b={i % 4 === 0}>{i + 1}</Bn>)}<Marker /></Ruler>
      <VScroll><div><Sq $h={20} aria-label="Scroll up"><Icon n="chevU" s={12} /></Sq><VThumb /></div><Sq $h={18} aria-label="Scroll down"><Icon n="chevD" s={12} /></Sq></VScroll>
      <Lanes>
        {Array.from({ length: 8 }, (_, i) => (
          <Lane key={i}>
            <LaneHead $on={i < 3}>Track {i + 1}<Led $s={11} aria-label={`Track ${i + 1} mute`} /></LaneHead>
            <LaneEdge $on={i < 3} />
            <LaneBody>{i === 0 ? <Lane1 /> : i === 1 ? <Lane2 /> : i === 2 ? <Lane3 /> : null}</LaneBody>
          </Lane>
        ))}
        <Glow />
      </Lanes>
    </PlaylistGrid>
  </Win>
);

/* ---------- mixer ---------- */

const MixBody = styled.div`display: flex; flex: 1; min-height: 0; margin-left: 2px;`;
const Fx = styled.div`display: flex; flex-direction: column; width: 218px; flex: none; margin: 0 7px 0 4px; background: #626e70;`;
const FxRow = styled.div<{ $h: number }>`display: flex; align-items: center; gap: 5px; height: ${p => p.$h}px; padding: 0 4px; border-bottom: 1px solid #525e60; color: #4d595b; font-size: 12px;`;
const Slot = styled.div<{ $on: boolean }>`
  display: flex; align-items: center; gap: 5px; height: 19px; padding: 0 5px 0 4px; background: #58666a; border-bottom: 1px solid #4a575b;
  ${cond} font-size: 13px; color: ${p => (p.$on ? "#e4eaea" : "#8b9798")}; font-style: ${p => (p.$on ? "normal" : "italic")};
  span { flex: 1; } > svg { color: #c9d1d1; }
`;
const Eq = styled.div`display: grid; grid-template-columns: 146px 66px; height: 117px; padding: 10px 2px 0;`;
const EqGraph = styled.div`border: 1px solid #4c585a; background: linear-gradient(#e4eaea, #e4eaea) 0 52px / 100% 3px no-repeat;`;
const EqFaders = styled.div`display: flex; justify-content: space-between; padding: 0 2px 0 7px;`;
const EqKnobs = styled.div`display: flex; justify-content: space-between; align-items: flex-start; height: 54px; padding: 12px 4px 0 3px; font-size: 13px; line-height: 17px; color: #465254;`;
const KnobGrid = styled.div`display: grid; grid-template-columns: repeat(3, 17px); gap: 2px 5px;`;

const Fader = styled.input.attrs({ type: "range" })<{ $h: number; $w: number; $t: number; $green?: boolean }>`
  appearance: none; writing-mode: vertical-lr; direction: rtl; width: ${p => p.$w}px; height: ${p => p.$h}px;
  background: ${p => (p.$green ? `linear-gradient(${lime}, ${lime}) 50% 100% / 2px 75% no-repeat` : "linear-gradient(rgba(15,22,24,.5), rgba(15,22,24,.5)) 50% 0 / 3px 100% no-repeat")};
  &::-webkit-slider-thumb {
    appearance: none; width: ${p => p.$w}px; height: ${p => p.$t}px; border-radius: 2px; border: 0;
    background: ${p => (p.$green ? "linear-gradient(#c8f878 0 20%, #8fe030 50%, #3f8a10 52%, #7bc830 60% 75%, #3c7a14)" : "linear-gradient(#e6e9ea 0 20%, #a9aeb1 50%, #474e52 52%, #8d9497 60% 72%, #4b5256 75% 88%, #999fa2)")};
  }
`;
const Meters = styled.div`display: flex; width: 89px; flex: none; border-left: 1px solid #2b3639;`;
const Strip = styled.div<{ $bg: string }>`
  display: flex; flex-direction: column; flex: none; width: 44px; min-height: 0; border-right: 1px solid rgba(0, 0, 0, .12);
  background: linear-gradient(rgba(0, 0, 0, 0), rgba(0, 0, 0, .32)) 0 17px / 100% 142px no-repeat, ${p => p.$bg};
  > * { flex: none; }
`;
const StripNo = styled.div<{ $bg: string; $on?: boolean }>`
  height: 17px; background: ${p => p.$bg}; text-align: center; ${cond} font-size: 14px; line-height: 17px; color: ${p => (p.$on ? "#fff" : "#2c383c")};
`;
const StripTop = styled.div`display: flex; height: 102px; padding: 6px 0 3px;`;
const StripName = styled.div<{ $dim?: boolean }>`
  width: 25px; writing-mode: vertical-rl; transform: rotate(180deg); ${light} font-size: 16px; line-height: 25px; color: ${p => (p.$dim ? "#b4bfbc" : "#fff")}; white-space: nowrap;
`;
const Meter = styled.div<{ $on?: boolean }>`
  display: flex; align-items: flex-end; gap: 1px; width: 14px; background: rgba(70, 80, 86, .55); border: 1px solid rgba(18, 26, 28, .6); ${p => p.$on && css`outline: 1px solid ${lime};`}
`;
const Level = styled.i<{ $h: number }>`flex: 1; height: ${p => p.$h}%; background: linear-gradient(#f3e83c, ${lime} 60%);`;
const Center = styled.div<{ $h: number; $c?: string }>`display: flex; align-items: center; justify-content: center; height: ${p => p.$h}px; color: ${p => p.$c ?? "#c9d2d2"};`;
const StripMid = styled.div`display: flex; height: 206px; padding-top: 2px;`;
const StripIcons = styled.div`width: 25px;`;
const Dot = styled.i`width: 6px; height: 6px; border-radius: 50%; background: currentColor;`;
const FaderSlot = styled.div`padding-top: 5px;`;
const CStrip = styled.div`width: 46px; display: flex; flex-direction: column; align-items: stretch; background: #344043;`;
const CMeter = styled.div`
  display: flex; align-items: flex-end; gap: 1px; width: 27px; height: 293px; margin: 6px auto 6px; border: 1px solid #253033; position: relative;
  i { flex: 1; background: ${lime}; } i:nth-child(1) { height: 191px; } i:nth-child(2) { height: 198px; }
`;
const Scale = styled.ol`position: absolute; inset: 5px 0 auto; margin: 0; padding: 0; list-style: none; text-align: center; font: 10px/22px ${regular}; color: #5d696b; &::after { content: ""; position: absolute; left: 0; right: 0; top: 47px; height: 2px; background: #d79a4c; }`;
const Inserts = styled.div`display: flex; flex: 1; min-width: 0; overflow: hidden; border-left: 10px solid #253134; border-right: 13px solid #253134;`;

interface StripData { no: string; name?: string; head: string; body: string; ic: string; send: string; lv?: [number, number]; up?: boolean; dim?: boolean; master?: boolean; }
const MixStrip = ({ d }: { d: StripData }) => (
  <Strip $bg={d.body}>
    <StripNo $bg={d.head} $on={d.master}>{d.no}</StripNo>
    <StripTop><StripName $dim={d.dim}>{d.name}</StripName><Meter $on={d.master}>{d.lv && d.lv.map((v, i) => <Level key={i} $h={v} />)}</Meter></StripTop>
    <Center $h={24}><Led $s={12} aria-label={`${d.no} enable`} /></Center>
    <Center $h={36}><Knob s={28} face="#4c565c" mark="none" label={`${d.no} pan`} /></Center>
    <StripMid>
      <StripIcons>
        <Center $h={17} $c={d.ic}><Icon n="updown" s={10} /></Center>
        <Center $h={17} $c={d.ic}><Icon n="leftright" s={12} /></Center>
        <Center $h={22}><Knob s={13} face="#3d484b" mark="none" label={`${d.no} stereo`} /></Center>
        <Center $h={84} />
        <Center $h={26} $c={d.send}><Icon n="route" s={15} /></Center>
        <Center $h={18} $c={d.master ? "#e8b850" : d.ic}><Icon n="clock" s={13} /></Center>
        <Center $h={20} $c={d.ic}><Dot /></Center>
      </StripIcons>
      <FaderSlot><Fader $h={189} $w={14} $t={24} $green={d.master} defaultValue={83} aria-label={`${d.no} volume`} /></FaderSlot>
    </StripMid>
    <Center $h={26} $c={d.ic}>{d.up && <Icon n="caret" s={9} />}</Center>
    <Center $h={12} $c={d.master ? lime : "#66737488"}><Icon n={d.master ? "down" : "ext"} s={12} /></Center>
    {d.no === "1" && <Center $h={44} $c="#1f2b14"><svg width="34" height="8"><path d="M4 1 1 4l3 3" fill="none" stroke="currentColor" /><path d="M12 3h22v3H12z" fill="currentColor" /></svg></Center>}
  </Strip>
);

const yellow = "#eec84a", off = "#55626488";
const tinted: StripData[] = [
  { no: "1", name: "REVERB 1", head: "#9dcc60", body: "#425b26", ic: "#c6dba8", send: yellow, lv: [24, 19], up: true },
  { no: "2", name: "REVERB 2", head: "#5f58c4", body: "#27245c", ic: "#d0cef0", send: yellow, lv: [28, 53], up: true },
  { no: "3", name: "DELAY", head: "#64bdc0", body: "#285357", ic: "#b4dedf", send: yellow },
  { no: "4", name: "STEREO SEP", head: "#b34ba8", body: "#531d50", ic: "#e2b6de", send: yellow, up: true },
  { no: "5", head: "#a07030", body: "#584526", ic: "#d9c4a4", send: yellow },
  { no: "6", head: "#a09a30", body: "#555126", ic: "#cfcba4", send: yellow },
  { no: "7", head: "#4060b0", body: "#263658", ic: "#c3cdec", send: off },
];
const plain: StripData[] = Array.from({ length: 23 }, (_, i) => ({
  no: String(i + 8), name: i + 8 > 25 ? `Insert ${i + 8}` : undefined, head: "#667274", body: "#344143", ic: "#cdd6d6", send: off, dim: true,
}));
const slots = ["FabFilter Pro-C", "Slot 2", "Slot 3", "Slot 4", "Slot 5", "Slot 6", "Slot 7", "Slot 8", "FabFilter Pro-L", "Youlean Loudness Meter"];

const Mixer = () => (
  <Win>
    <WinHead $gap={8} $dim $tall><Icon n="tri" s={9} />Mixer - Master
      <Push><Icon n="hand" s={16} /><Icon n="align" s={14} /><Tint $c="#5fa0ac"><Icon n="mono" s={15} /></Tint><Tint $c="#b0a040"><Icon n="wide" s={14} /></Tint>Wide<Gap $w={25} /><Icon n="tri" s={7} /><Gap $w={2} /><Icon n="min" s={11} /><Icon n="max" s={11} /><Icon n="close" s={11} /></Push>
    </WinHead>
    <MixBody>
      <Fx>
        <FxRow $h={32}><Icon n="io" s={18} /><Choose h={22} label="Input" value="(none)" /><Tint $c="#b5bfbf"><Icon n="clock" s={18} /></Tint><Gap $w={0} /></FxRow>
        {slots.map(s => {
          const on = !s.startsWith("Slot");
          return <Slot key={s} $on={on}><Icon n="tri" s={9} /><span>{s}</span><Knob s={17} face="#48555a" mark="none" ring={on ? "#e6ecec" : "#a5afb0"} label={`${s} mix`} /><Led $s={9} aria-label={`${s} enable`} /></Slot>;
        })}
        <Eq><EqGraph /><EqFaders>{["Low", "Mid", "High"].map(b => <Fader key={b} $h={107} $w={13} $t={18} defaultValue={50} aria-label={`${b} band`} />)}</EqFaders></Eq>
        <EqKnobs><span>Equalizer</span><KnobGrid>{[-120, 0, 110, -60, -60, -60].map((a, i) => <Knob key={i} s={17} a={a} face="#515d60" label={`Band knob ${i + 1}`} />)}</KnobGrid></EqKnobs>
        <FxRow $h={32}><Tint $c="#e6c85a"><Icon n="clock" s={18} /></Tint><Choose bare h={22} label="Delay" value="(none)" /></FxRow>
        <FxRow $h={32}><Icon n="out" s={18} /><Choose h={22} label="Output" value="Out 1 - Out 2" /></FxRow>
      </Fx>
      <Meters>
        <CStrip><StripNo $bg="#667274">C</StripNo><CMeter><i /><i /><Scale><li>3</li><li>0</li></Scale></CMeter><Center $h={26} $c="#55626488"><Icon n="route" s={14} /></Center><Center $h={18} /><Center $h={18}><Dot /></Center></CStrip>
        <MixStrip d={{ no: "M", name: "Master", head: "#667274", body: "#414b52", ic: "#cdd6d6", send: yellow, lv: [66, 67], up: true, dim: true, master: true }} />
      </Meters>
      <Inserts>{[...tinted, ...plain].map(d => <MixStrip key={d.no} d={d} />)}</Inserts>
    </MixBody>
  </Win>
);

/* ---------- synth window ---------- */

const Synth = styled.section`
  position: absolute; left: 748px; top: 583px; width: 906px; height: 318px; border: 5px solid #4a585c; background: #050709;
  display: grid; grid-template-rows: 221px 1fr; font-family: ${regular}; color: #e8ecee;
`;
const SynthTop = styled.div`display: grid; grid-template-columns: 76px 302px 370px 1fr; gap: 0; overflow: hidden;`;
const Macros = styled.div`display: flex; flex-direction: column; justify-content: flex-end; gap: 3px; height: 218px; padding: 0 2px; border-right: 2px solid #2a2e32;`;
const Macro = styled.div`display: grid; grid-template-columns: 42px 1fr; align-items: center; height: 54px; padding: 0 0 12px 0; flex: none; background: linear-gradient(#181d20 80%, #080a0c 81%); border-top: 1px solid #24292d; justify-items: center; color: #262c31;`;
const Panel = styled.div`display: grid; grid-template-rows: 130px 1fr; border-right: 2px solid #23282c;`;
const Graph = styled.div`display: flex; overflow: hidden; background: #07090b; border-bottom: 2px solid #000;`;
const Controls = styled.div`display: flex; align-items: stretch; padding: 11px 6px 9px; background: #13171b;`;
const Dial = styled.div<{ $w: number; $start?: boolean }>`
  display: flex; flex-direction: column; align-items: ${p => (p.$start ? "flex-start" : "center")}; justify-content: space-between; width: ${p => p.$w}px; font-size: 10px; line-height: 14px; white-space: nowrap;
`;
const Tag = styled.b`font-size: 9px; line-height: 12px; color: #f6f8fa; white-space: nowrap;`;
const Col = styled.div<{ $w: number; $h?: number }>`display: flex; flex-direction: column; justify-content: space-between; width: ${p => p.$w}px; height: ${p => (p.$h ? `${p.$h}px` : "auto")};`;
const Tick = styled.label`display: flex; align-items: center; gap: 6px; height: 12px; font-weight: bold; font-size: 9px;`;
const Box = styled.input.attrs({ type: "checkbox" })`appearance: none; width: 8px; height: 8px; border: 1px solid #30363b; background: #12161a; &:checked { background: #dce8fb; border-color: #7f9cc8; }`;
const Spin = styled.span`display: flex; align-items: center; justify-content: flex-end; gap: 5px; width: 36px; height: 19px; padding-right: 4px; background: #040506; border: 1px solid #1e2327; font-size: 10px; input { width: 14px; text-align: right; }`;
const Folder = styled.button`width: 36px; height: 24px; background: linear-gradient(#3a3f44, #23272b); border: 1px solid #050607;`;
const Voicing = styled.div`display: flex; flex-direction: column; padding: 9px 6px 0 7px; background: #13171b;`;
const VTitle = styled.b`height: 19px; margin-bottom: 14px; padding-left: 6px; background: #1b2024; font: bold 12px/19px "Open Sans Condensed", sans-serif;`;
const VRow = styled.div`display: flex; align-items: center; justify-content: space-between; height: 22px; padding: 0 4px; font-size: 10px;`;
const SynthLow = styled.div`display: grid; grid-template-columns: 152px 595px 1fr; padding-top: 4px; min-height: 0;`;
const Wheels = styled.div`display: flex; align-items: center; gap: 12px; padding: 2px 14px 0 10px; border: solid #15181b; border-width: 0 14px; height: 83px; background: #090b0d;`;
const Wheel = styled.i`width: 15px; height: 60px; border: 1px solid #1d2124; background: repeating-linear-gradient(rgba(0, 0, 0, .4) 0 1px, transparent 1px 3px), linear-gradient(90deg, #060708, #24282b, #060708);`;
const Board = styled.div`padding-top: 8px; background: #0a0c0e;`;
const Porta = styled.div`display: grid; grid-template-columns: 1fr 1fr; align-content: space-between; justify-items: center; align-items: center; margin: 0 14px 0 15px; padding: 5px 8px 8px; height: 83px; background: #0b0e11; border: 1px solid #1c2024; gap: 0 6px;`;

const SynthKnob = ({ a, s = 32, label }: { a: number; s?: number; label: string }) => {
  const r = (a * Math.PI) / 180, x = Math.sin(r), y = -Math.cos(r);
  return (
    <KnobButton aria-label={label}>
      <svg width={s} height={s} viewBox="-17 -17 34 34">
        <circle r="15.500" fill="#1f2327" /><circle r="14" fill="#070809" /><circle r="12" fill="#373b3f" /><path d="M-8 -6a10 10 0 0 1 16 0" fill="none" stroke="#5b6166" strokeWidth="1.500" />
        <path d={`M${x * 6} ${y * 6}L${x * 12} ${y * 12}`} stroke="#f2f5f6" strokeWidth="2" />
        <g fill="#a9afb3"><circle cx="-14" cy="15" r="1" /><circle cx="14" cy="15" r="1" /><circle cy="-16" r="1" /></g>
      </svg>
    </KnobButton>
  );
};
const D = ({ v, l, a, w }: { v: string; l: string; a: number; w: number }) => <Dial $w={w}>{v}<SynthKnob a={a} label={l} /><Tag>{l}</Tag></Dial>;
const Check = ({ t, on }: { t: string; on?: boolean }) => <Tick><Box defaultChecked={on} />{t}</Tick>;
const Stepper = ({ v, label }: { v: string; label: string }) => <Spin><input aria-label={label} defaultValue={v} /><Icon n="spin" s={10} /></Spin>;

const blacks = Array.from({ length: 5 }, (_, o) => [1, 2, 4, 5, 6].map((k, i) => (o * 7 + k) * 17 + [-2, 2, -2, 0, 2][i])).flat();
const Piano = () => (
  <svg width="595" height="70" viewBox="0 0 595 70">
    <defs><linearGradient id="ivory" x2="0" y2="1"><stop offset="0" stopColor="#8f9396" /><stop offset=".12" stopColor="#dfe1e2" /><stop offset="1" stopColor="#d0d3d5" /></linearGradient></defs>
    {Array.from({ length: 35 }, (_, i) => <rect key={i} x={i * 17} width="16" height="70" fill="url(#ivory)" />)}
    {blacks.map(x => <g key={x}><rect x={x - 5} width="10" height="46" fill="#101214" /><rect x={x - 3} width="6" height="40" fill="#33373a" /></g>)}
    <path d="M0 1h595" stroke="#3f7fae" strokeWidth="2" />
  </svg>
);

const SynthWindow = () => (
  <Synth>
    <SynthTop>
      <Macros>{[0, 1, 2, 3].map(i => <Macro key={i}><SynthKnob a={-135} s={32} label={`Macro ${i + 1}`} /><Icon n="arc" s={20} /></Macro>)}</Macros>
      <Panel>
        <Graph>
          <svg width="300" height="130" viewBox="829 588 300 130">
            <defs><linearGradient id="env" x2="0" y2="1"><stop offset="0" stopColor="#0a3a60" /><stop offset="1" stopColor="#06233c" /></linearGradient></defs>
            <path d="M835 588h84v127h-84z" fill="url(#env)" /><path d="M835 588v127M919 588v127" stroke="#2f86cf" strokeWidth="2" />
            <path d="M1002 588v127M1086 588v127" stroke="#30353a" /><path d="M1103 588v130M1125 588v130" stroke="#1d2226" />
            <path d="M1109 614l4-4 4 4M1109 705l4 4 4-4M1110 592h7v5h-7z" fill="none" stroke="#31373c" strokeWidth="2" /><circle cx="1112" cy="656" r="4" fill="none" stroke="#31373c" strokeWidth="2" />
            <path d="M833 716l2-4 2 4zM917 716l2-4 2 4z" fill="#e8f2fa" />
            <g fill="#d2d8dc" fontSize="8"><text x="908" y="714">1 s</text><text x="994" y="714">2 s</text><text x="1078" y="714">3 s</text></g>
          </svg>
        </Graph>
        <Controls><D v="0.5 ms" l="ATTACK" a={-105} w={50} /><D v="0.0 ms" l="HOLD" a={-135} w={50} /><Gap $w={17} /><D v="1.00 s" l="DECAY" a={0} w={50} /><D v="0.0 dB" l="SUSTAIN" a={135} w={50} /><Gap $w={17} /><D v="15 ms" l="RELEASE" a={-80} w={50} /></Controls>
      </Panel>
      <Panel>
        <Graph>
          <svg width="368" height="130" viewBox="1131 588 368 130">
            <defs><linearGradient id="lfo" x2="0" y2="1"><stop offset="0" stopColor="#07304f" /><stop offset="1" stopColor="#041b2c" /></linearGradient></defs>
            <path d="M1135 656 1223 618 1298 588H1333L1404 618 1493 656V716H1135z" fill="url(#lfo)" />
            <path d="M1315 588v128M1407 588v128M1135 649h358" stroke="#12405f" />
            <path d="M1135 656 1223 618 1298 586M1330 586 1404 618 1493 656" fill="none" stroke="#2d7fd0" strokeWidth="2" />
            <g fill="#1d64b0"><circle cx="1223" cy="618" r="3" /><circle cx="1404" cy="618" r="3" /></g><g fill="#e8eef4"><circle cx="1136" cy="656" r="3" /><circle cx="1493" cy="656" r="3" /></g>
          </svg>
        </Graph>
        <Controls>
          <Dial $w={58} $start><Folder aria-label="Presets"><svg width="16" height="12"><path d="M1 3h5l1-2h7v2h1v8H1z" fill="#f0f3f4" /></svg></Folder><Stepper v="8" label="Grid" /><Tag>&nbsp;&nbsp;GRID</Tag></Dial>
          <Col $w={54}><Check t="TRIG" /><Check t="ENV" /><Check t="OFF" on /><Tag>&nbsp;&nbsp;MODE</Tag></Col>
          <Col $w={48}><Check t="BPM" on /><Check t="ANCH" on /><Check t="TRIP" /><Check t="DOT" /></Col>
          <D v="1/4" l="RATE" a={5} w={46} /><D v="Off" l="RISE" a={-135} w={45} /><D v="Off" l="DELAY" a={-135} w={45} /><Gap $w={10} /><D v="0.0" l="SMOOTH" a={-135} w={50} />
        </Controls>
      </Panel>
      <Panel>
        <Graph>
          <svg width="148" height="130" viewBox="1501 588 148 130">
            <path d="M1506 716 1639 588h7v128z" fill="#05263f" /><path d="M1504 648h142M1575 588v128" stroke="#1b3a4c" />
            <path d="M1506 715 1639 587" stroke="#2d74c0" strokeWidth="2" /><path d="M1599 625h47M1599 625v90" stroke="#3f8f70" strokeDasharray="1 2" /><path d="M1637 624h9M1599 707v9" stroke="#a8f0d0" strokeWidth="2" />
            <circle cx="1576" cy="647" r="3" fill="#1d64b0" /><circle cx="1599" cy="625" r="3" fill="#4fae8c" />
          </svg>
        </Graph>
        <Voicing>
          <VTitle>VOICING</VTitle>
          <VRow><Check t="MONO" /><Tag>POLY</Tag><Stepper v="8" label="Polyphony" /></VRow>
          <VRow><Check t="LEGATO" /><span>9&nbsp;&nbsp;&nbsp;&nbsp;/ 72&nbsp;&nbsp;&nbsp;&nbsp;</span></VRow>
        </Voicing>
      </Panel>
    </SynthTop>
    <SynthLow>
      <Wheels><Col $w={42} $h={47}><Stepper v="2" label="Bend up" /><Stepper v="-2" label="Bend down" /></Col><Wheel /><Wheel /></Wheels>
      <Board><Piano /></Board>
      <Porta><Check t="ALWAYS" /><Check t="SCALED" /><SynthKnob a={-135} s={30} label="Porta" /><svg width="28" height="28"><path d="M0 0h28v28H0z" fill="#020303" /><path d="M3 25 25 3v22z" fill="#2b2f33" /><path d="M3 25 25 3" stroke="#aab0b4" strokeWidth="1.500" /></svg><Tag>PORTA</Tag><Tag>CURVE</Tag></Porta>
    </SynthLow>
  </Synth>
);

/* ---------- app ---------- */

const Shell = styled.div`position: relative; display: grid; grid-template-rows: auto 1fr; height: 100vh; overflow: hidden;`;
const Desk = styled.main`display: grid; grid-template-columns: 246px 1fr; min-height: 0;`;
const Badge = styled.div`
  position: absolute; right: 40px; bottom: 40px; width: 120px; height: 120px; border-radius: 50%; display: flex; align-items: center; justify-content: center;
  background: rgba(132, 24, 27, .88); color: #c9c4bd; font: bold 23px "Liberation Sans", sans-serif;
`;
const Pointer = styled.svg`position: absolute; left: 586px; top: 548px;`;

export default function App() {
  return (
    <Shell>
      <Global />
      <Toolbar />
      <Desk>
        <Browser />
        <Windows>
          <TopWindows><ChannelRack /><Playlist /></TopWindows>
          <Mixer />
        </Windows>
      </Desk>
      <SynthWindow />
      <Pointer width="13" height="19" viewBox="0 0 13 19"><path d="M1 1v14l3-3 3 6 2-1-3-6h5z" fill="#fff" stroke="#222" strokeWidth=".8" /></Pointer>
      <Badge>Educator</Badge>
    </Shell>
  );
}
